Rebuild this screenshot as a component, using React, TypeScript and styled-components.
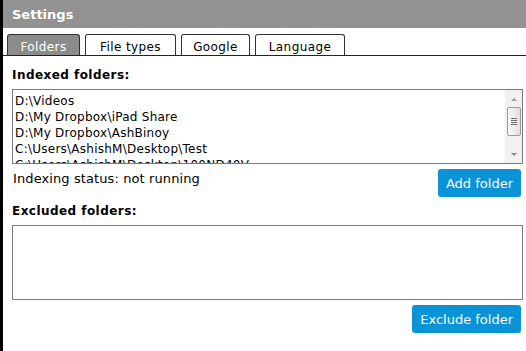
import React from 'react';
import styled, { createGlobalStyle } from 'styled-components';

const GlobalStyle = createGlobalStyle`
  html, body {
    margin: 0;
    padding: 0;
    background: #fff;
  }
  body {
    font-family: 'DejaVu Sans', Verdana, sans-serif;
    font-size: 12px;
    color: #000;
  }
`;

const Window = styled.div`
  width: 523px;
  height: 351px;
  border-left: 3px solid #000;
  display: flex;
  flex-direction: column;
  overflow: hidden;
`;

const TitleBar = styled.div`
  height: 28px;
  flex-shrink: 0;
  background: #929292;
  color: #fff;
  font-weight: bold;
  font-size: 13px;
  display: flex;
  align-items: center;
  padding-left: 9px;
`;

const TabBar = styled.div`
  display: flex;
  align-items: flex-end;
  gap: 5px;
  padding: 6px 0 0 4px;
  border-bottom: 1px solid #222;
`;

const Tab = styled.div<{ $active?: boolean; $width: number }>`
  height: 21px;
  box-sizing: border-box;
  width: ${(p) => p.$width}px;
  border: 1px solid #333;
  border-bottom: none;
  border-radius: 3px 3px 0 0;
  background: ${(p) => (p.$active ? '#8c8c8c' : '#fff')};
  color: ${(p) => (p.$active ? '#fff' : '#000')};
  font-size: 12px;
  letter-spacing: 0.4px;
  display: flex;
  align-items: center;
  justify-content: center;
  padding-top: 3px;
`;

const Content = styled.div`
  padding: 12px 3px 0 9px;
  display: flex;
  flex-direction: column;
`;

const Label = styled.div<{ $top?: number }>`
  font-weight: bold;
  font-size: 12px;
  letter-spacing: 0.45px;
  line-height: 15px;
  margin-bottom: 6px;
  margin-top: ${(p) => p.$top ?? 0}px;
`;

const ListBox = styled.div`
  height: 75px;
  box-sizing: border-box;
  border: 1px solid #7b7b7b;
  display: flex;
  overflow: hidden;
`;

const Lines = styled.div`
  flex: 1;
  padding: 3px 0 0 2px;
  font-size: 12px;
  letter-spacing: 0.25px;
  line-height: 16px;
  white-space: nowrap;
  overflow: hidden;
`;

const ScrollBar = styled.div`
  width: 18px;
  background: #f1f1f1;
  border-left: 1px solid #fafafa;
  display: flex;
  flex-direction: column;
  align-items: center;
  justify-content: space-between;
  padding: 8px 0 7px;
  box-sizing: border-box;
`;

const Arrow = styled.div<{ $down?: boolean }>`
  width: 0;
  height: 0;
  border-left: 3px solid transparent;
  border-right: 3px solid transparent;
  ${(p) =>
    p.$down ? 'border-top: 3px solid #8a8a8a;' : 'border-bottom: 3px solid #9a9a9a;'}
`;

const Thumb = styled.div`
  width: 14px;
  height: 29px;
  box-sizing: border-box;
  border: 1px solid #9a9a9a;
  border-radius: 2px;
  background: linear-gradient(to right, #fafafa, #e0e0e0);
  display: flex;
  flex-direction: column;
  align-items: center;
  justify-content: center;
  gap: 1px;
  margin-top: -12px;
`;

const Grip = styled.div`
  width: 6px;
  height: 1px;
  background: #6f6f6f;
`;

const Row = styled.div<{ $top?: number }>`
  display: flex;
  justify-content: space-between;
  align-items: flex-start;
  margin-top: ${(p) => p.$top ?? 0}px;
`;

const Status = styled.div`
  font-size: 13px;
  letter-spacing: 0.1px;
  line-height: 15px;
  padding-top: 2px;
  padding-left: 1px;
`;

const Button = styled.button`
  background: #0b93d7;
  color: #fff;
  border: none;
  border-radius: 3px;
  font-family: 'DejaVu Sans', Verdana, sans-serif;
  font-size: 13px;
  height: 28px;
  padding: 0 8px;
  margin-right: 2px;
  margin-left: auto;
`;

const EmptyBox = styled.div`
  height: 75px;
  box-sizing: border-box;
  border: 1px solid #7b7b7b;
`;

const folders = [
  'D:\\Videos',
  'D:\\My Dropbox\\iPad Share',
  'D:\\My Dropbox\\AshBinoy',
  'C:\\Users\\AshishM\\Desktop\\Test',
  'C:\\Users\\AshishM\\Desktop\\100ND40V',
];

const tabs = [
  { name: 'Folders', width: 73 },
  { name: 'File types', width: 91 },
  { name: 'Google', width: 69 },
  { name: 'Language', width: 90 },
];

export default function App() {
  return (
    <>
      <GlobalStyle />
      <Window>
        <TitleBar>Settings</TitleBar>
        <TabBar>
          {tabs.map((t, i) => (
            <Tab key={t.name} $active={i === 0} $width={t.width}>
              {t.name}
            </Tab>
          ))}
        </TabBar>
        <Content>
          <Label>Indexed folders:</Label>
          <ListBox>
            <Lines>
              {folders.map((f) => (
                <div key={f}>{f}</div>
              ))}
            </Lines>
            <ScrollBar>
              <Arrow />
              <Thumb>
                <Grip />
                <Grip />
                <Grip />
                <Grip />
              </Thumb>
              <Arrow $down />
            </ScrollBar>
          </ListBox>
          <Row $top={5}>
            <Status>Indexing status: not running</Status>
            <Button>Add folder</Button>
          </Row>
          <Label $top={7}>Excluded folders:</Label>
          <EmptyBox />
          <Row $top={5}>
            <Button>Exclude folder</Button>
          </Row>
        </Content>
      </Window>
    </>
  );
}
